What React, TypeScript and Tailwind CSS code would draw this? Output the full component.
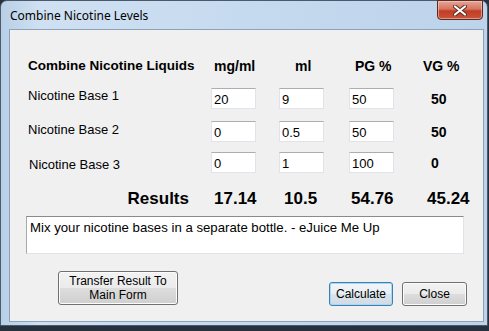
const rows = [
  { label: 'Nicotine Base 1', mg: '20', ml: '9', pg: '50', vg: '50', labelPt: 'pt-[0px]', labelPl: 'pl-0', mt: 'mt-[12px]' },
  { label: 'Nicotine Base 2', mg: '0', ml: '0.5', pg: '50', vg: '50', labelPt: 'pt-[1px]', labelPl: 'pl-0', mt: 'mt-[12px]' },
  { label: 'Nicotine Base 3', mg: '0', ml: '1', pg: '100', vg: '0', labelPt: 'pt-[5px]', labelPl: 'pl-[1px]', mt: 'mt-[10px]' },
];

function Field({ value }: { value: string }) {
  return (
    <div className="w-[45px] h-[21px] bg-white border border-[#e2e3ea] border-t-[#abadb3] pl-[2px] pt-[3px] text-[13px] leading-[15px] text-black">
      {value}
    </div>
  );
}

function WinButton({ children, className, focused }: { children: React.ReactNode; className: string; focused?: boolean }) {
  return (
    <div
      className={
        'flex items-center justify-center text-center rounded-[3px] border text-[12px] leading-[14px] text-black ' +
        (focused
          ? 'border-[#3c7fb1] bg-[linear-gradient(#f2f6f9_0%,#e8eef3_50%,#dae4ec_51%,#cfdbe5_100%)] shadow-[inset_0_0_0_1px_#a9d8f5] '
          : 'border-[#707070] bg-[linear-gradient(#f2f2f2_0%,#ebebeb_50%,#dddddd_51%,#cfcfcf_100%)] shadow-[inset_0_0_0_1px_#fcfcfc] ') +
        className
      }
    >
      {children}
    </div>
  );
}

export default function App() {
  return (
    <div className="w-[489px] h-[331px] bg-[#26313d] overflow-hidden font-['Liberation_Sans',Arial,sans-serif]">
      <div className="w-[488px] h-[326px] rounded-t-[7px] border border-[#4a5a6c] bg-[linear-gradient(90deg,#b8cfe6_0%,#cfe0f2_8%,#c6daef_50%,#bcd3ea_100%)] flex flex-col">
        {/* title bar */}
        <div className="h-[28px] flex items-start relative">
          <span className="pl-[9px] pt-[8px] text-[12px] leading-[14px] text-black font-['Noto_Sans','Open_Sans',sans-serif]">
            Combine Nicotine Levels
          </span>
          <div className="absolute left-[436px] top-[-1px] w-[46px] h-[20px] rounded-b-[4px] border border-[#5b2a22] bg-[linear-gradient(#e5a497_0%,#d5755f_45%,#c13d24_55%,#c9543a_100%)] flex items-center justify-center shadow-[inset_0_0_0_1px_rgba(255,220,210,0.5)]">
            <svg width="14" height="11" viewBox="0 0 14 11">
              <path d="M2 1.5 L12 9.5 M12 1.5 L2 9.5" stroke="#5b2a22" strokeWidth="4" strokeLinecap="round" />
              <path d="M2 1.5 L12 9.5 M12 1.5 L2 9.5" stroke="#ffffff" strokeWidth="2.2" strokeLinecap="round" />
            </svg>
          </div>
        </div>

        {/* client area */}
        <div className="ml-[8px] w-[475px] h-[293px] bg-[#f0f0f0] border border-[#8da2b8]">
          <div className="pl-[18px] pt-[26px] text-black">
            <div className="grid grid-cols-[183px_68px_70px_74px_1fr] h-[20px] items-center text-[14px] font-bold">
              <span className="text-[13.5px]">Combine Nicotine Liquids</span>
              <span className="pl-[3px]">mg/ml</span>
              <span className="pl-[16px]">ml</span>
              <span className="pl-[6px]">PG %</span>
              <span>VG %</span>
            </div>

            {rows.map((r) => (
              <div key={r.label} className={'grid grid-cols-[183px_68px_70px_74px_1fr] h-[21px] items-start ' + r.mt}>
                <span className={'text-[13px] leading-[15px] ' + r.labelPt + ' ' + r.labelPl}>{r.label}</span>
                <Field value={r.mg} />
                <Field value={r.ml} />
                <Field value={r.pg} />
                <span className="pl-[8px] pt-[3px] text-[14px] leading-[16px] font-bold">{r.vg}</span>
              </div>
            ))}

            <div className="mt-[13px] grid grid-cols-[183px_68px_70px_74px_1fr] h-[22px] items-center text-[17px] font-bold">
              <span className="text-right pr-[22px]">Results</span>
              <span className="pl-[3px]">17.14</span>
              <span className="pl-[5px]">10.5</span>
              <span className="pl-[2px]">54.76</span>
              <span className="pl-[4px]">45.24</span>
            </div>
          </div>

          <div className="ml-[16px] mt-[8px] w-[438px] h-[38px] bg-white border border-[#e2e3ea] border-t-[#8a8a8a] border-l-[#a8a8a8] pl-[3px] pt-[3px] text-[13.2px] leading-[15px] text-black">
            Mix your nicotine bases in a separate bottle. - eJuice Me Up
          </div>

          <div className="flex items-start mt-[17px]">
            <WinButton className="ml-[48px] w-[120px] h-[34px] pb-[1px]">
              Transfer Result To
              <br />
              Main Form
            </WinButton>
            <WinButton focused className="ml-[151px] mt-[11px] w-[64px] h-[24px]">
              Calculate
            </WinButton>
            <WinButton className="ml-[9px] mt-[11px] w-[65px] h-[24px]">Close</WinButton>
          </div>
        </div>
      </div>
    </div>
  );
}
